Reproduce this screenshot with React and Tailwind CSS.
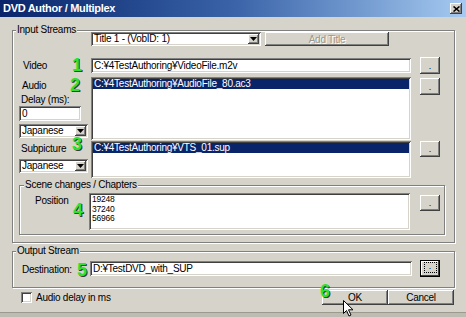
import React from "react";

const FONT = "font-['Liberation_Sans',Arial,sans-serif]";

// classic win32 bevels
const RAISED =
  "bg-[#d6d3ca] shadow-[inset_-1px_-1px_0_#404040,inset_1px_1px_0_#ffffff,inset_-2px_-2px_0_#808080]";
const SUNKEN =
  "bg-white shadow-[inset_1px_1px_0_#808080,inset_-1px_-1px_0_#ffffff,inset_2px_2px_0_#404040,inset_-2px_-2px_0_#d6d3ca]";
const GROUP =
  "relative border border-[#808080] shadow-[1px_1px_0_#ffffff,inset_1px_1px_0_#ffffff]";

const Marker = ({ n, className }) => (
  <span
    className={`absolute text-[18px] leading-none font-bold text-[#2fe22f] [text-shadow:1px_1px_0_#3a3a3a] ${className}`}
  >
    {n}
  </span>
);

const DotsButton = ({ className = "", focused = false }) => (
  <button
    type="button"
    className={`flex w-[20px] items-end justify-center pb-[3px] text-[9px] leading-none ${
      focused
        ? "bg-[#d6d3ca] border border-black shadow-[inset_-1px_-1px_0_#404040,inset_1px_1px_0_#ffffff]"
        : RAISED
    } ${className}`}
  >
    {focused ? (
      <span className="flex h-[11px] w-[13px] items-end justify-center border border-dotted border-black pb-[1px]">
        .
      </span>
    ) : (
      "."
    )}
  </button>
);

const Combo = ({ value, className = "" }) => (
  <div className={`flex items-stretch p-[2px] ${SUNKEN} ${className}`}>
    <span className="flex-1 truncate pl-[1px] leading-[10px]">{value}</span>
    <span className={`flex w-[11px] items-center justify-center ${RAISED}`}>
      <svg width="7" height="4" viewBox="0 0 7 4">
        <path d="M0 0h7L3.5 4z" fill="#000" />
      </svg>
    </span>
  </div>
);

const Label = ({ children, className = "" }) => (
  <span className={`block leading-[12px] ${className}`}>{children}</span>
);

const GroupLabel = ({ children, className = "" }) => (
  <span
    className={`absolute -top-[7px] bg-[#d6d3ca] px-[1px] leading-[12px] ${className}`}
  >
    {children}
  </span>
);

export default function App() {
  return (
    <div
      className={`${FONT} relative flex h-[317px] w-[466px] flex-col overflow-hidden bg-[#d6d3ca] text-[10px] tracking-[-0.25px] text-black`}
    >
      {/* Title bar */}
      <div className="flex h-[17px] items-center justify-between bg-linear-to-r from-[#0a246a] via-[#3a63a8] to-[#a6caf0] pl-[3px] pr-[4px]">
        <span className="text-[11px] font-bold tracking-[-0.3px] text-white">
          DVD Author / Multiplex
        </span>
        <span
          className={`flex h-[11px] w-[12px] items-center justify-center ${RAISED}`}
        >
          <svg width="7" height="6" viewBox="0 0 7 6">
            <path
              d="M0.5 0.5l6 5M6.5 0.5l-6 5"
              stroke="#000"
              strokeWidth="1.6"
            />
          </svg>
        </span>
      </div>

      <div className="flex flex-1 flex-col pl-[12px] pr-[11px]">
        {/* Input Streams */}
        <div className={`${GROUP} mt-[13px] flex h-[213px] flex-col`}>
          <GroupLabel className="left-[3px]">Input Streams</GroupLabel>

          <div className="mt-[1px] flex h-[14px] pl-[78px]">
            <Combo value="Title 1 - (VobID: 1)" className="w-[170px]" />
            <button
              type="button"
              className={`ml-[4px] w-[124px] text-[#9a978f] [text-shadow:1px_1px_0_#ffffff] ${RAISED}`}
            >
              Add Title
            </button>
          </div>

          {/* Video */}
          <div className="mt-[11px] flex h-[17px] items-start">
            <div className="w-[78px] pl-[10px] pt-[3px]">
              <Label>Video</Label>
            </div>
            <div
              className={`mt-[1px] h-[15px] w-[320px] pl-[3px] pt-[2px] leading-[11px] ${SUNKEN}`}
            >
              C:¥4TestAuthoring¥VideoFile.m2v
            </div>
            <DotsButton className="ml-[9px] h-[17px]" />
          </div>

          {/* Audio */}
          <div className="mt-[3px] flex items-start">
            <div className="flex w-[78px] flex-col pl-[6px]">
              <Label className="mt-[3px] pl-[3px]">Audio</Label>
              <Label className="mt-[2px] pl-[2px]">Delay (ms):</Label>
              <div
                className={`h-[15px] w-[62px] pl-[3px] pt-[2px] leading-[11px] ${SUNKEN}`}
              >
                0
              </div>
              <Combo value="Japanese" className="mt-[3px] h-[14px] w-[69px]" />
            </div>
            <div className={`h-[63px] w-[320px] p-[2px] ${SUNKEN}`}>
              <div className="h-[10px] bg-[#0a246a] pl-[1px] leading-[10px] text-white">
                C:¥4TestAuthoring¥AudioFile_80.ac3
              </div>
            </div>
            <DotsButton className="ml-[9px] mt-[1px] h-[17px]" />
          </div>

          {/* Subpicture */}
          <div className="mt-[1px] flex items-start">
            <div className="flex w-[78px] flex-col pl-[6px]">
              <Label className="mt-[2px] pl-[2px]">Subpicture</Label>
              <Combo value="Japanese" className="mt-[4px] h-[14px] w-[69px]" />
            </div>
            <div className={`h-[37px] w-[320px] p-[2px] ${SUNKEN}`}>
              <div className="h-[10px] bg-[#0a246a] pl-[1px] leading-[10px] text-white">
                C:¥4TestAuthoring¥VTS_01.sup
              </div>
            </div>
            <DotsButton className="ml-[9px] h-[16px]" />
          </div>

          {/* Scene changes */}
          <div className={`${GROUP} ml-[6px] mt-[7px] flex h-[50px] w-[426px] items-start`}>
            <GroupLabel className="left-[4px]">Scene changes / Chapters</GroupLabel>
            <div className="w-[69px] pl-[15px] pt-[9px]">
              <Label>Position</Label>
            </div>
            <div
              className={`mt-[7px] h-[37px] w-[321px] pl-[3px] pt-[2px] text-[8.5px] leading-[9.5px] ${SUNKEN}`}
            >
              <div>19248</div>
              <div>37240</div>
              <div>56966</div>
            </div>
            <DotsButton className="ml-[10px] mt-[9px] h-[16px]" />
          </div>
        </div>

        {/* Output Stream */}
        <div className={`${GROUP} mt-[8px] flex h-[37px] items-start`}>
          <GroupLabel className="left-[3px]">Output Stream</GroupLabel>
          <div className="w-[77px] pl-[9px] pt-[12px]">
            <Label>Destination:</Label>
          </div>
          <div
            className={`mt-[9px] h-[15px] w-[322px] pl-[3px] pt-[2px] leading-[11px] ${SUNKEN}`}
          >
            D:¥TestDVD_with_SUP
          </div>
          <DotsButton focused className="ml-[8px] mt-[8px] h-[17px]" />
        </div>

        {/* Bottom row */}
        <div className="mt-[2px] flex h-[15px] items-center pl-[9px] pr-[1px]">
          <span className={`h-[11px] w-[11px] ${SUNKEN}`} />
          <span className="ml-[4px] leading-[12px]">Audio delay in ms</span>
          <button
            type="button"
            className={`ml-auto h-[15px] w-[66px] leading-none ${RAISED}`}
          >
            OK
          </button>
          <button
            type="button"
            className={`h-[15px] w-[66px] leading-none ${RAISED}`}
          >
            Cancel
          </button>
        </div>
      </div>

      <div className="h-[5px] border-t border-[#9c998f] bg-[#bebbb2]" />

      {/* tutorial markers */}
      <Marker n="1" className="left-[72px] top-[56px]" />
      <Marker n="2" className="left-[70px] top-[76px]" />
      <Marker n="3" className="left-[72px] top-[135px]" />
      <Marker n="4" className="left-[73px] top-[201px]" />
      <Marker n="5" className="left-[77px] top-[261px]" />
      <Marker n="6" className="left-[320px] top-[282px]" />

      {/* mouse cursor */}
      <svg
        className="absolute left-[343px] top-[300px]"
        width="11"
        height="17"
        viewBox="0 0 11 17"
      >
        <path
          d="M0.5 0.5v13l3-3 2.5 5.5 2-1-2.5-5.2h4.5z"
          fill="#fff"
          stroke="#000"
          strokeWidth="1"
          strokeLinejoin="miter"
        />
      </svg>
    </div>
  );
}
